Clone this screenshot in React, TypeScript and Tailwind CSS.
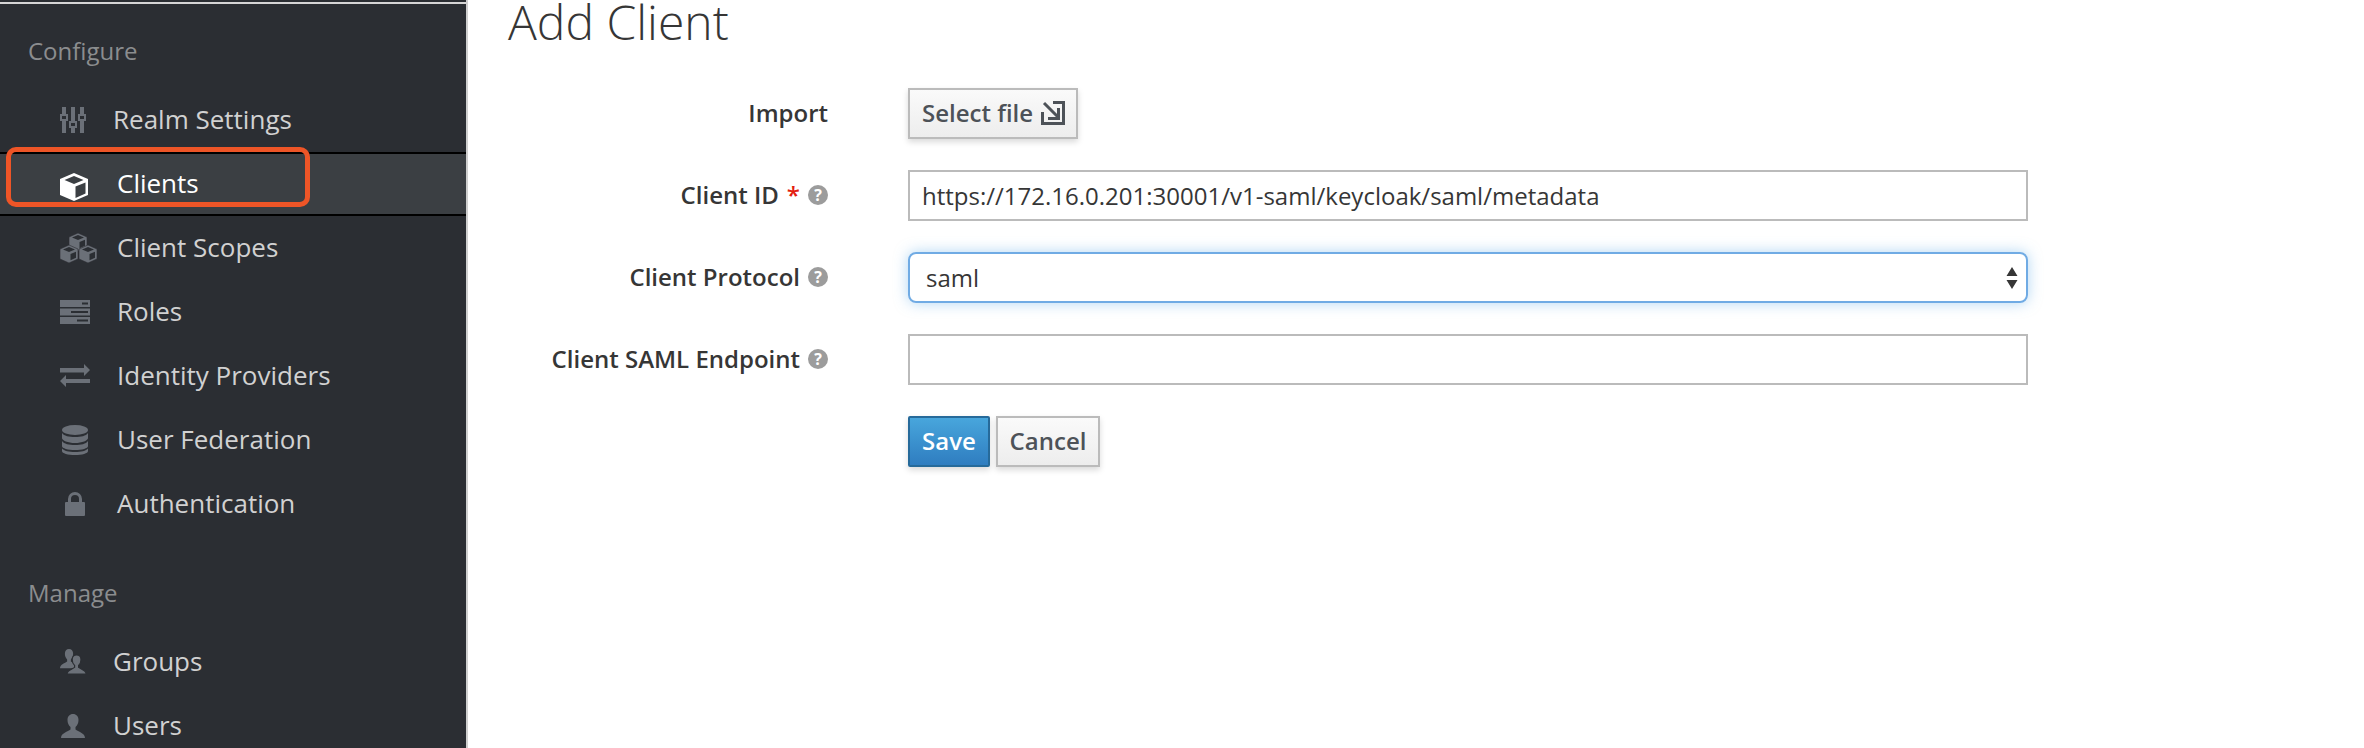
import type { ReactNode } from "react";

const Sliders = () => (
  <svg viewBox="0 0 26 26" className="h-[26px] w-[26px]" fill="#6b7078">
    <rect x="2" y="0" width="4" height="7" />
    <rect x="2" y="14" width="4" height="12" />
    <path fillRule="evenodd" d="M0 7h8v7H0zM2 9v3h4V9z" />
    <rect x="11" y="0" width="4" height="14" />
    <rect x="11" y="21" width="4" height="5" />
    <path fillRule="evenodd" d="M9 14h8v7H9zM11 16v3h4v-3z" />
    <rect x="20" y="0" width="4" height="7" />
    <rect x="20" y="14" width="4" height="12" />
    <path fillRule="evenodd" d="M18 7h8v7h-8zM20 9v3h4V9z" />
  </svg>
);

const Cube = () => (
  <svg viewBox="0 0 28 28" className="h-[28px] w-[28px]">
    <path d="M14 0 28 6v16l-14 6L0 22V6z" fill="#fff" />
    <path d="M14 3 23.500 7 14 11 4.500 7z" fill="#3b3f43" />
    <path d="M15.500 13.500 25.500 9.500v11l-10 4.500z" fill="#3b3f43" />
  </svg>
);

function MiniCube({ x, y }: { x: number; y: number }) {
  return (
    <g transform={`translate(${x} ${y})`}>
      <path d="M9 0 18 4v10l-9 4-9-4V4z" fill="#6b7078" stroke="#2b2e33" strokeWidth="0.6" />
      <path d="M9 2 15 4.500 9 7 3 4.500z" fill="#2b2e33" />
      <path d="M10.500 9 16 6.700v6l-5.500 2.500z" fill="#2b2e33" />
    </g>
  );
}

const Cubes = () => (
  <svg viewBox="0 0 37 30" className="h-[30px] w-[37px]">
    <MiniCube x={9} y={0} />
    <MiniCube x={0} y={12} />
    <MiniCube x={19} y={12} />
  </svg>
);

const Repository = () => (
  <svg viewBox="0 0 30 24" className="h-[24px] w-[30px]" fill="#6b7078">
    <path fillRule="evenodd" d="M0 0h30v7H0zM22 2.500v2h6v-2z" />
    <path fillRule="evenodd" d="M0 8.500h30v7H0zM11 11v2h17v-2z" />
    <path fillRule="evenodd" d="M0 17h30v7H0zM17 19.500v2h11v-2z" />
  </svg>
);

const Exchange = () => (
  <svg viewBox="0 0 30 24" className="h-[24px] w-[30px]" fill="#6b7078">
    <path d="M0 4h24V0l6 6-6 6V8.500H0z" />
    <path d="M30 15H6v-4l-6 6 6 6v-4h24z" />
  </svg>
);

const Database = () => (
  <svg viewBox="0 0 26 30" className="h-[30px] w-[26px]" fill="#6b7078">
    <ellipse cx="13" cy="5" rx="13" ry="5" />
    <path d="M0 8c2 3 7 4 13 4s11-1 13-4v5c0 2.500-6 5-13 5S0 15.500 0 13z" />
    <path d="M0 16c2 3 7 4 13 4s11-1 13-4v5c0 2.500-6 4-13 4S0 23.500 0 21z" />
    <path d="M0 23.500c2 2.500 7 3.500 13 3.500s11-1 13-3.500V26c0 2.500-6 4-13 4S0 28.500 0 26z" />
  </svg>
);

const Lock = () => (
  <svg viewBox="0 0 20 24" className="h-[24px] w-[20px]" fill="#6b7078">
    <path fillRule="evenodd" d="M3 10V7a7 7 0 0 1 14 0v3h2a1 1 0 0 1 1 1v12a1 1 0 0 1-1 1H1a1 1 0 0 1-1-1V11a1 1 0 0 1 1-1zM6 10h8V7a4 4 0 0 0-8 0z" />
  </svg>
);

const personPath =
  "M12 0c3.300 0 5.500 2.500 5.500 6 0 3-1.200 5.500-3 7v2.500C17 17.500 24 19 24 24H0c0-5 7-6.500 9.500-8.500V13c-1.800-1.500-3-4-3-7 0-3.500 2.200-6 5.500-6z";

const Person = () => (
  <svg viewBox="0 0 24 24" className="h-[24px] w-[24px]" fill="#6b7078">
    <path d={personPath} />
  </svg>
);

const Group = () => (
  <svg viewBox="0 0 26 25" className="h-[25px] w-[26px]" fill="#6b7078">
    <g transform="translate(0 0) scale(0.75 0.8)">
      <path d={personPath} />
    </g>
    <g transform="translate(7 6) scale(0.8)">
      <path d={personPath} stroke="#2b2e33" strokeWidth="1.500" />
    </g>
  </svg>
);

const SelectFileIcon = () => (
  <svg viewBox="0 0 24 24" className="h-[24px] w-[24px]" fill="none" stroke="#4d5258" strokeWidth="3">
    <path d="M1.500 11v11.500h21V1.500H12" />
    <path d="M3 2l14 14" />
    <path d="M17.500 7v10.500H7" />
  </svg>
);

const HelpIcon = () => (
  <span className="flex h-[20px] w-[20px] shrink-0 items-center justify-center rounded-full bg-[#9c9c9c] text-[16px] leading-none font-bold text-white">
    ?
  </span>
);

function NavItem({
  icon,
  label,
  iconBox,
}: {
  icon: ReactNode;
  label: string;
  iconBox: string;
}) {
  return (
    <div className="flex h-[64px] items-center pb-[1px] pl-[60px] text-[26px] text-[#d1d1d1]">
      <div className={`flex shrink-0 items-center ${iconBox}`}>{icon}</div>
      <span>{label}</span>
    </div>
  );
}

function Field({
  label,
  required,
  help,
  children,
}: {
  label: string;
  required?: boolean;
  help?: boolean;
  children: ReactNode;
}) {
  return (
    <div className="flex h-[51px] items-center">
      <div className="flex w-[828px] items-center justify-end gap-[8px] pb-[2px] text-[24px] font-semibold text-[#363636]">
        <span>{label}</span>
        {required && <span className="text-[#e3200f]">*</span>}
        {help && <HelpIcon />}
      </div>
      <div className="ml-[80px] w-[1120px]">{children}</div>
    </div>
  );
}

export default function App() {
  return (
    <div className="flex h-[748px] w-[2364px] overflow-hidden bg-white font-['Open_Sans',sans-serif]">
      <aside className="relative h-full w-[468px] shrink-0 border-r-[2px] border-r-[#cfcfcf] bg-[#2b2e33] pt-[2px]">
        <div className="h-[2px] bg-[#d6d6d6]" />
        <div className="pt-[29px] pl-[28px] text-[24px] leading-[36px] text-[#8b8d8f]">
          Configure
        </div>
        <div className="mt-[19px]">
          <NavItem icon={<Sliders />} label="Realm Settings" iconBox="w-[53px]" />
          <div className="flex h-[64px] items-center border-y-[2px] border-black bg-[#3b3f43] pl-[60px] text-[26px] text-white">
            <div className="flex w-[57px] shrink-0 items-center pt-[6px]">
              <Cube />
            </div>
            <span className="pb-[1px]">Clients</span>
          </div>
          <NavItem icon={<Cubes />} label="Client Scopes" iconBox="w-[57px]" />
          <NavItem icon={<Repository />} label="Roles" iconBox="w-[57px]" />
          <NavItem icon={<Exchange />} label="Identity Providers" iconBox="w-[57px]" />
          <NavItem icon={<Database />} label="User Federation" iconBox="w-[57px] pl-[2px]" />
          <NavItem icon={<Lock />} label="Authentication" iconBox="w-[57px] pl-[5px]" />
        </div>
        <div className="mt-[39px] pl-[28px] text-[24px] leading-[36px] text-[#8b8d8f]">
          Manage
        </div>
        <div className="mt-[19px]">
          <NavItem icon={<Group />} label="Groups" iconBox="w-[53px]" />
          <NavItem icon={<Person />} label="Users" iconBox="w-[53px] pl-[1px]" />
        </div>
        {/* annotation drawn over the screenshot */}
        <div className="absolute top-[147px] left-[6px] h-[60px] w-[304px] rounded-[10px] border-[5px] border-[#ee5527]" />
      </aside>

      <main className="min-w-0 flex-1">
        <h1 className="ml-[40px] text-[48px] leading-[44px] font-light text-[#363636]">
          Add Client
        </h1>
        <div className="mt-[44px] ml-[-468px] flex flex-col gap-[31px]">
          <Field label="Import">
            <button className="flex h-[51px] w-[170px] items-center gap-[8px] border-[2px] border-[#bbb] bg-gradient-to-b from-[#fafafa] to-[#ededed] pb-[2px] pl-[12px] text-[24px] font-semibold text-[#4d5258] shadow-[0_3px_6px_rgba(0,0,0,0.15)]">
              Select file
              <SelectFileIcon />
            </button>
          </Field>
          <Field label="Client ID" required help>
            <div className="flex h-[51px] items-center border-[2px] border-[#bbb] pl-[12px] text-[24px] text-[#363636]">
              https://172.16.0.201:30001/v1-saml/keycloak/saml/metadata
            </div>
          </Field>
          <Field label="Client Protocol" help>
            <div className="flex h-[51px] items-center justify-between rounded-[8px] border-[2px] border-[#70abe4] pr-[8px] pl-[16px] text-[24px] text-[#363636] shadow-[0_0_14px_rgba(102,175,233,0.5)]">
              saml
              <svg viewBox="0 0 12 22" className="h-[22px] w-[12px]" fill="#363636">
                <path d="M6 0l5.500 9H.5zM.5 13h11L6 22z" />
              </svg>
            </div>
          </Field>
          <Field label="Client SAML Endpoint" help>
            <div className="h-[51px] border-[2px] border-[#bbb]" />
          </Field>
          <div className="ml-[908px] flex gap-[6px]">
            <button className="h-[51px] w-[82px] rounded-[2px] border-[2px] border-[#266a9a] bg-gradient-to-b from-[#48a6dc] to-[#2f7dc0] pb-[2px] text-[24px] font-semibold text-white shadow-[0_3px_6px_rgba(0,0,0,0.15)]">
              Save
            </button>
            <button className="h-[51px] w-[104px] border-[2px] border-[#bbb] bg-gradient-to-b from-[#fafafa] to-[#ededed] pb-[2px] text-[24px] font-semibold text-[#4d5258] shadow-[0_3px_6px_rgba(0,0,0,0.15)]">
              Cancel
            </button>
          </div>
        </div>
      </main>
    </div>
  );
}
